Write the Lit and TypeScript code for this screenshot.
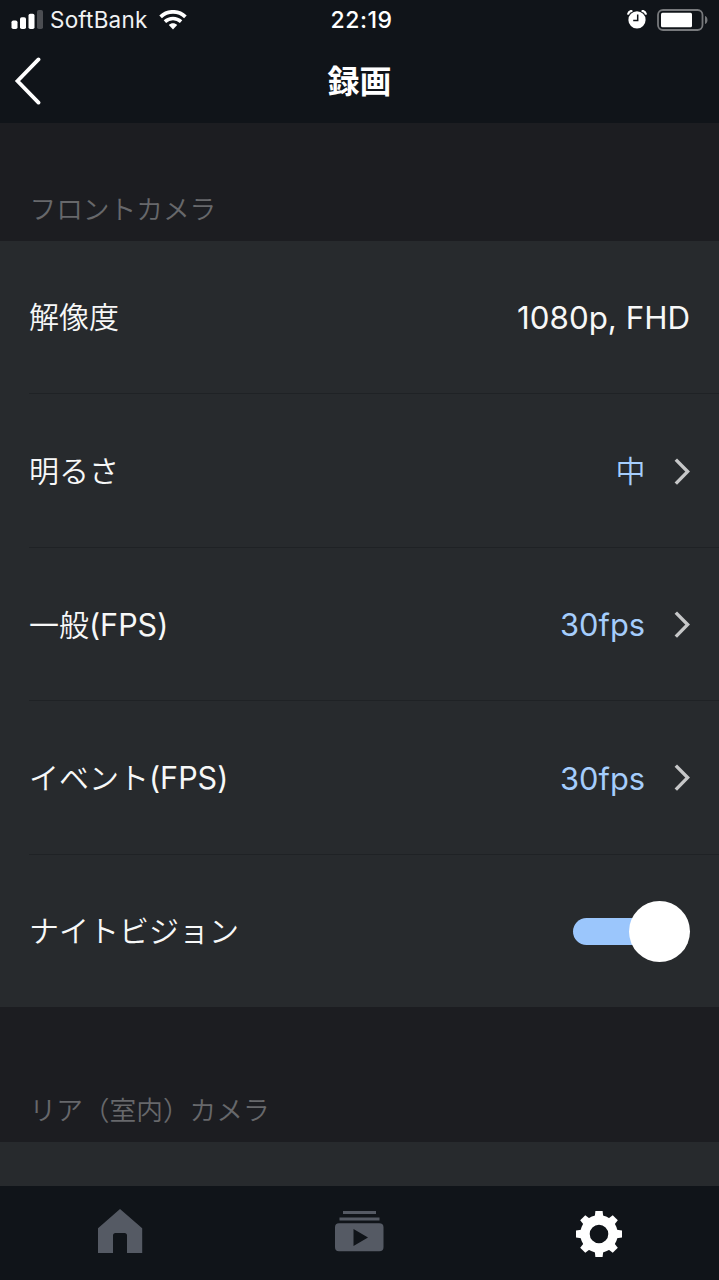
import { LitElement, html, css, svg, nothing } from "lit";
import { customElement, property, state } from "lit/decorators.js";

const gearTeeth = [0, 45, 90, 135, 180, 225, 270, 315];

@customElement("status-bar")
class StatusBar extends LitElement {
  static styles = css`
    :host {
      display: grid;
      grid-template-columns: 1fr auto 1fr;
      height: 39px;
      color: #fff;
      font-size: 22px;
      line-height: 39px;
    }
    .left, .right { display: flex; align-items: center; }
    .left { padding-left: 11px; }
    .right { justify-content: flex-end; padding-right: 10px; }
    .carrier { margin: 0 12px 1px 7px; font-size: 22.5px; letter-spacing: 0.2px; color: #f1f2f3; }
    .time { font-size: 23px; font-weight: 500; letter-spacing: 0.55px; padding: 1px 0 0 4px; }
    .alarm { margin-right: 10px; }
    svg { display: block; }
  `;
  render() {
    return html`
      <div class="left">
        <svg width="32" height="20" viewBox="0 0 32 20">
          <rect x="0.5" y="10.5" width="6" height="8.5" rx="1.8" fill="#fff" />
          <rect x="9" y="7.3" width="6" height="11.7" rx="1.8" fill="#fff" />
          <rect x="17.5" y="3.7" width="6" height="15.3" rx="1.8" fill="#fff" />
          <rect x="26" y="0" width="6" height="19" rx="1.8" fill="#4b4d51" />
        </svg>
        <span class="carrier">SoftBank</span>
        <svg width="28" height="20" viewBox="0 0 28 20" fill="none" stroke="#fff">
          <path d="M1.6 6.8 C8.6 0.2 19.4 0.2 26.4 6.8" stroke-width="3.8" />
          <path d="M5.9 11.6 C10.6 7.3 17.4 7.3 22.1 11.6" stroke-width="3.5" />
          <path d="M14 19.4 L9.8 15 C12.2 12.7 15.8 12.7 18.2 15 Z" fill="#fff" stroke="none" />
        </svg>
      </div>
      <div class="time">22:19</div>
      <div class="right">
        <svg class="alarm" width="20" height="20" viewBox="0 0 20 20">
          <circle cx="10" cy="9.9" r="8.6" fill="#fff" />
          <path d="M1 4.6 C1.3 2.4 3 0.9 5.4 0.8" fill="none" stroke="#fff" stroke-width="2.2" />
          <path d="M14.6 0.8 C17 0.9 18.7 2.4 19 4.6" fill="none" stroke="#fff" stroke-width="2.2" />
          <path d="M10.7 4.6 V10.6 H6.2" fill="none" stroke="#101419" stroke-width="1.5" />
        </svg>
        <svg width="52" height="22" viewBox="0 0 52 22">
          <rect x="1" y="1" width="44.5" height="20" rx="5" fill="none" stroke="#77797c" stroke-width="1.8" />
          <rect x="4" y="3.8" width="31" height="14.4" rx="1.5" fill="#fff" />
          <path d="M48 7 C51.3 8 51.3 14 48 15 Z" fill="#77797c" />
        </svg>
      </div>
    `;
  }
}

@customElement("nav-header")
class NavHeader extends LitElement {
  @property() heading = "";
  static styles = css`
    :host {
      display: grid;
      grid-template-columns: 1fr auto 1fr;
      align-items: center;
      height: 84px;
      color: #fff;
    }
    .back { display: block; margin: 0 0 1px 13px; }
    .title { font-size: 32px; font-weight: 700; line-height: 82px; padding-top: 2px; }
  `;
  render() {
    return html`
      <svg class="back" width="28" height="48" viewBox="0 0 28 48">
        <path d="M25.5 2.4 L4.5 24 L25.5 45.6" fill="none" stroke="#fff" stroke-width="3.8" stroke-linecap="round" />
      </svg>
      <div class="title">${this.heading}</div>
    `;
  }
}

@customElement("setting-row")
class SettingRow extends LitElement {
  @property() label = "";
  @property() value = "";
  @property({ type: Boolean }) link = false;
  @property({ type: Boolean }) toggle = false;
  @property({ type: Boolean }) last = false;
  @state() private on = true;
  static styles = css`
    :host { display: block; padding-left: 29px; color: #f7f8f8; }
    .row {
      box-sizing: border-box;
      height: 153.4px;
      display: flex;
      align-items: center;
      justify-content: space-between;
      padding: 2px 29px 0 0;
      border-bottom: 1.5px solid #1f2225;
      font-size: 30px;
      font-weight: 350;
    }
    .row.last { height: 152.8px; border-bottom-color: transparent; }
    .label { white-space: nowrap; padding-bottom: 6px; }
    .last .label { padding-bottom: 4.5px; }
    .label.mixed { padding-bottom: 4px; }
    .latin { font-weight: 400; font-size: 30.5px; }
    .end { display: flex; align-items: center; }
    .value { font-size: 31.3px; font-weight: 380; }
    .value.blue { color: #a5cdfc; font-size: 30.8px; margin-right: -0.5px; }
    .value.cjk { font-size: 30px; font-weight: 350; padding-bottom: 6px; margin-right: -1px; }
    .chevron { display: block; margin-left: 28.5px; }
    .switch { width: 117px; height: 62px; display: flex; align-items: center; }
    .track { flex: 1; height: 27px; margin-right: -20px; background: #9bc6fc; border-radius: 14px; }
    .knob { width: 61px; height: 61px; border-radius: 50%; background: #fff; }
  `;
  render() {
    const latinStart = this.label.indexOf("(");
    const head = latinStart < 0 ? this.label : this.label.slice(0, latinStart);
    const tail = latinStart < 0 ? "" : this.label.slice(latinStart);
    const cjk = /[\u3000-\u9fff]/.test(this.value);
    return html`
      <div class="row ${this.last ? "last" : ""}">
        <span class="label ${tail ? "mixed" : ""}">${head}${tail ? html`<span class="latin">${tail}</span>` : nothing}</span>
        <div class="end">
          ${this.value
            ? html`<span class="value ${this.link ? "blue" : ""} ${cjk ? "cjk" : ""}">${this.value}</span>`
            : nothing}
          ${this.link
            ? html`<svg class="chevron" width="17" height="28" viewBox="0 0 17 28">
                <path d="M2.8 1.6 L14.6 13.6 L2.8 25.6" fill="none" stroke="#c6c7c8" stroke-width="3.4" />
              </svg>`
            : nothing}
          ${this.toggle
            ? html`<div class="switch" role="switch" aria-checked=${this.on}>
                <div class="track"></div>
                <div class="knob"></div>
              </div>`
            : nothing}
        </div>
      </div>
    `;
  }
}

@customElement("tab-bar")
class TabBar extends LitElement {
  static styles = css`
    :host {
      display: grid;
      grid-template-columns: repeat(3, 1fr);
      justify-items: center;
      height: 94px;
      background: #101419;
    }
    svg { display: block; margin-top: 22px; }
  `;
  render() {
    return html`
      <svg width="50" height="50" viewBox="0 0 50 50">
        <path
          d="M25 1 L47.2 20.3 V45 H32 V27.5 Q32 25 29.5 25 H20.5 Q18 25 18 27.5 V45 H3 V20.3 Z"
          fill="#555a64"
        />
      </svg>
      <svg width="50" height="50" viewBox="0 0 50 50">
        <rect x="9" y="3" width="33" height="3" fill="#555a64" />
        <rect x="5.5" y="9.5" width="40" height="3" fill="#555a64" />
        <path
          d="M5 15.3 H45.3 Q49.5 15.3 49.5 19.3 V39.3 Q49.5 43.3 45.3 43.3 H5 Q1 43.3 1 39.3 V19.3 Q1 15.3 5 15.3 Z M19.5 21 V38 L34 29.5 Z"
          fill="#555a64"
          fill-rule="evenodd"
        />
      </svg>
      <svg width="50" height="50" viewBox="-25 -26 50 50">
        ${gearTeeth.map(
          (a) => svg`<path d="M-4.4 -16 L-3.6 -23 H3.6 L4.4 -16 Z" fill="#fff" transform="rotate(${a})" />`
        )}
        <circle r="14" fill="none" stroke="#fff" stroke-width="9.4" />
      </svg>
    `;
  }
}

@customElement("app-root")
class AppRoot extends LitElement {
  static styles = css`
    :host {
      display: flex;
      flex-direction: column;
      height: 1280px;
      overflow: hidden;
      background: #1c1d21;
      font-family: Inter, "Noto Sans CJK JP", sans-serif;
    }
    .top { flex: none; background: #101419; }
    .content { flex: 1; min-height: 0; overflow: hidden; }
    .section {
      box-sizing: border-box;
      display: flex;
      align-items: flex-end;
      padding: 0 29px 12.5px 29.5px;
      font-size: 26.7px;
      line-height: 40px;
      font-weight: 350;
      color: #67686b;
    }
    .front { height: 118px; }
    .rear { height: 135px; }
    .group { background: #272a2d; }
    tab-bar { flex: none; }
  `;
  render() {
    return html`
      <div class="top">
        <status-bar></status-bar>
        <nav-header heading="録画"></nav-header>
      </div>
      <div class="content">
        <div class="section front">フロントカメラ</div>
        <div class="group">
          <setting-row label="解像度" value="1080p, FHD"></setting-row>
          <setting-row label="明るさ" value="中" link></setting-row>
          <setting-row label="一般(FPS)" value="30fps" link></setting-row>
          <setting-row label="イベント(FPS)" value="30fps" link></setting-row>
          <setting-row label="ナイトビジョン" toggle last></setting-row>
        </div>
        <div class="section rear">リア（室内）カメラ</div>
        <div class="group"><setting-row></setting-row></div>
      </div>
      <tab-bar></tab-bar>
    `;
  }
}
